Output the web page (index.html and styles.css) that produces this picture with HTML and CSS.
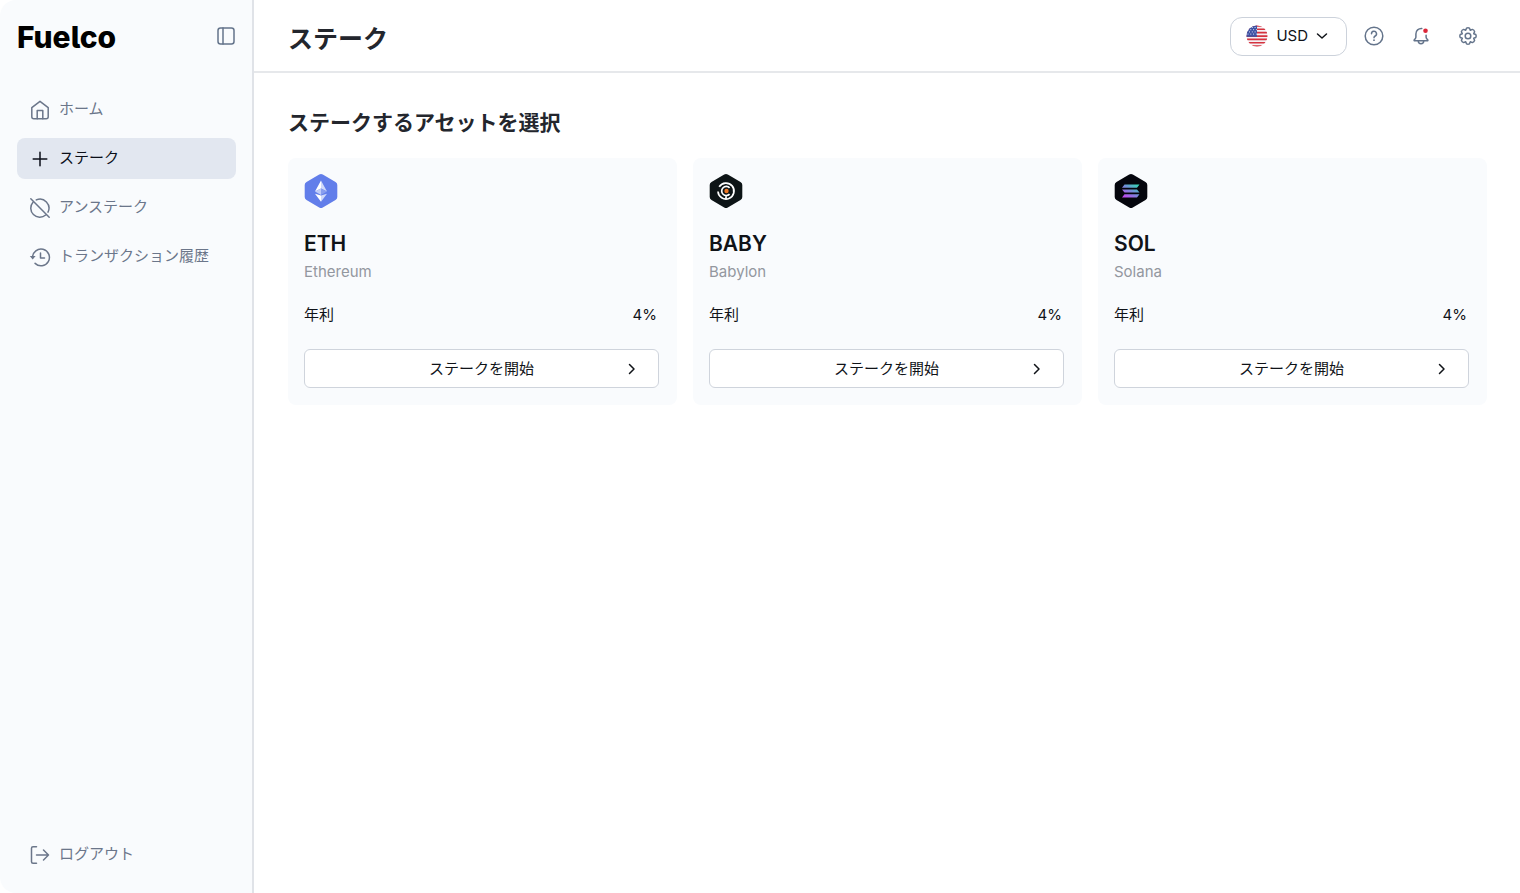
FILE: index.html
```html
<!DOCTYPE html>
<html lang="ja">
<head>
    <meta charset="UTF-8">
    <meta name="viewport" content="width=device-width, initial-scale=1.0">
    <title>Fuelco - ステーク</title>
    <link rel="stylesheet" href="styles.css">
</head>
<body>

    <div class="app">

        <!-- Sidebar -->
        <aside class="sidebar">
            <div class="brand">
                <a href="#" class="logo">Fuelco</a>
                <button type="button" class="icon-btn" aria-label="サイドバー">
                    <svg width="20" height="20" viewBox="0 0 20 20"><rect x="2" y="2" width="16" height="16" rx="2.5"/><path d="M7 2v16"/></svg>
                </button>
            </div>

            <nav class="menu">
                <a href="#" class="menu-item">
                    <svg width="22" height="22" viewBox="0 0 22 22"><path d="M2.800 8.600 11 2.300l8.200 6.300v9.200a2 2 0 0 1-2 2H4.800a2 2 0 0 1-2-2z"/><path d="M8.200 19.800v-8.300h5.600v8.300"/></svg>
                    <span>ホーム</span>
                </a>
                <a href="#" class="menu-item active">
                    <svg width="22" height="22" viewBox="0 0 22 22"><path d="M11 4.200v13.600M4.200 11h13.600"/></svg>
                    <span>ステーク</span>
                </a>
                <a href="#" class="menu-item">
                    <svg width="22" height="22" viewBox="0 0 22 22"><path d="M1.800 1.800 20.200 20.200"/><path d="M7.300 2.900A9 9 0 0 1 19 15.100M16.700 18A9 9 0 0 1 4 5.300"/></svg>
                    <span>アンステーク</span>
                </a>
                <a href="#" class="menu-item">
                    <svg width="22" height="22" viewBox="0 0 22 22"><path d="M3.600 11.500A8.400 8.400 0 1 1 6.100 17.400"/><path d="M11.500 7v5h4"/><path class="solid" d="M.8 10h5.800l-2.900 3.500z"/></svg>
                    <span>トランザクション履歴</span>
                </a>
            </nav>

            <div class="menu menu-bottom">
                <a href="#" class="menu-item">
                    <svg width="22" height="22" viewBox="0 0 22 22"><path d="M7.500 2.800H4a1.500 1.500 0 0 0-1.500 1.500v13.400A1.500 1.500 0 0 0 4 19.200h3.500"/><path d="M7.500 11h12M14.500 6l5 5-5 5"/></svg>
                    <span>ログアウト</span>
                </a>
            </div>
        </aside>

        <div class="page">
            <header class="topbar">
                <h1>ステーク</h1>
                <div class="tools">
                    <button type="button" class="currency">
                        <svg class="flag" width="22" height="22" viewBox="0 0 22 22">
                            <defs><clipPath id="flag-clip"><circle cx="11" cy="11" r="10.500"/></clipPath></defs>
                            <g clip-path="url(#flag-clip)">
                                <rect width="22" height="22" fill="#f4f1f4"/>
                                <path fill="#d5333f" d="M0 0h22v1.700H0zM0 3.400h22v1.700H0zM0 6.800h22v1.700H0zM0 10.200h22v1.700H0zM0 13.500h22v1.700H0zM0 16.900h22v1.700H0zM0 20.300h22V22H0z"/>
                                <rect width="11" height="11.800" fill="#3d52a4"/>
                                <path stroke="#d9def2" stroke-width="1" stroke-dasharray="1 1.800" d="M3 2.500h8M1.500 4.700h9.500M3 6.900h8M1.500 9.100h9.500"/>
                            </g>
                        </svg>
                        <span>USD</span>
                        <svg class="caret" width="12" height="12" viewBox="0 0 12 12"><path d="m1.500 4 4.500 4 4.500-4"/></svg>
                    </button>
                    <button type="button" class="icon-btn" aria-label="ヘルプ">
                        <svg width="20" height="20" viewBox="0 0 20 20"><circle cx="10" cy="10" r="8.800"/><path d="M7.500 7.800a2.500 2.500 0 1 1 3.700 2.200c-.8.500-1.200.9-1.200 1.800"/><circle class="solid" cx="10" cy="14.200" r=".9"/></svg>
                    </button>
                    <button type="button" class="icon-btn" aria-label="通知">
                        <svg width="20" height="20" viewBox="0 0 20 20"><path d="M10.800 2.400A5.500 5.500 0 0 0 4.900 8v3.200c0 .9-.9 1.800-1.700 2.800-.3.500 0 .8.500.8h12.600c.5 0 .8-.3.500-.8-.8-1-1.700-1.900-1.700-2.800V9.300"/><path d="M7.300 15a2.700 2.700 0 0 0 5.400 0"/><circle class="dot" cx="14.500" cy="4.800" r="2.300"/></svg>
                    </button>
                    <button type="button" class="icon-btn" aria-label="設定">
                        <svg width="20" height="20" viewBox="0 0 20 20"><circle cx="10" cy="10" r="2.800"/><path d="M8.500 2.200Q10 1.400 11.500 2.200L12.300 4.300 14.400 3.400Q16.100 3.900 16.600 5.600L15.700 7.700 17.800 8.500Q18.600 10 17.800 11.500L15.700 12.300 16.600 14.400Q16.100 16.100 14.400 16.600L12.300 15.700 11.500 17.800Q10 18.600 8.500 17.800L7.700 15.700 5.600 16.600Q3.900 16.100 3.400 14.400L4.300 12.300 2.200 11.500Q1.400 10 2.200 8.500L4.300 7.700 3.400 5.600Q3.900 3.900 5.600 3.400L7.700 4.300z"/></svg>
                    </button>
                </div>
            </header>

            <main class="content">
                <h2>ステークするアセットを選択</h2>

                <div class="assets">
                    <section class="card">
                        <svg class="coin" width="34" height="34" viewBox="0 0 34 34">
                            <path fill="#627eea" d="M15.200.6a3.600 3.600 0 0 1 3.600 0l12.700 7.300a3.600 3.600 0 0 1 1.800 3.100v12a3.600 3.600 0 0 1-1.800 3.100l-12.700 7.300a3.600 3.600 0 0 1-3.600 0L2.500 26.100A3.600 3.600 0 0 1 .7 23V11a3.600 3.600 0 0 1 1.800-3.100z"/>
                            <path fill="#fff" d="M17 6.500v8l-6 3zM17 21.500v6.300l-6-8z"/>
                            <path fill="#d0d9fa" d="M17 6.500l6 11-6-3zM17 21.500l6-1.700-6 8z"/>
                            <path fill="#c0ccf8" d="M17 14.500v6.400l-6-3.400z"/>
                            <path fill="#899eef" d="M17 14.500l6 3-6 3.400z"/>
                        </svg>
                        <h3>ETH</h3>
                        <p class="name">Ethereum</p>
                        <div class="rate"><span>年利</span><span>4%</span></div>
                        <button type="button" class="start-btn">
                            <span>ステークを開始</span>
                            <svg width="12" height="12" viewBox="0 0 12 12"><path d="m3.500 1.500 4.500 4.500-4.500 4.500"/></svg>
                        </button>
                    </section>

                    <section class="card">
                        <svg class="coin" width="34" height="34" viewBox="0 0 34 34">
                            <path fill="#0d1416" d="M15.200.6a3.600 3.600 0 0 1 3.600 0l12.700 7.300a3.600 3.600 0 0 1 1.800 3.100v12a3.600 3.600 0 0 1-1.800 3.100l-12.700 7.300a3.600 3.600 0 0 1-3.600 0L2.500 26.100A3.600 3.600 0 0 1 .7 23V11a3.600 3.600 0 0 1 1.800-3.100z"/>
                            <g fill="none" stroke="#fff" stroke-width="1.700">
                                <path d="M10.200 12.800a8 8 0 1 1-1.200 4.700"/>
                                <path d="M20.600 13.800a4.600 4.600 0 1 0 0 6.400M17 21.500V25"/>
                            </g>
                            <circle cx="17.500" cy="17" r="2.200" fill="#ee7623"/>
                        </svg>
                        <h3>BABY</h3>
                        <p class="name">Babylon</p>
                        <div class="rate"><span>年利</span><span>4%</span></div>
                        <button type="button" class="start-btn">
                            <span>ステークを開始</span>
                            <svg width="12" height="12" viewBox="0 0 12 12"><path d="m3.500 1.500 4.500 4.500-4.500 4.500"/></svg>
                        </button>
                    </section>

                    <section class="card">
                        <svg class="coin" width="34" height="34" viewBox="0 0 34 34">
                            <defs>
                                <linearGradient id="sol" gradientUnits="userSpaceOnUse" x1="23" y1="9" x2="12" y2="25">
                                    <stop offset="0" stop-color="#2de0b0"/>
                                    <stop offset=".5" stop-color="#748bd8"/>
                                    <stop offset="1" stop-color="#c643f0"/>
                                </linearGradient>
                            </defs>
                            <path fill="#05060d" d="M15.200.6a3.600 3.600 0 0 1 3.600 0l12.700 7.300a3.600 3.600 0 0 1 1.800 3.100v12a3.600 3.600 0 0 1-1.800 3.100l-12.700 7.300a3.600 3.600 0 0 1-3.600 0L2.500 26.100A3.600 3.600 0 0 1 .7 23V11a3.600 3.600 0 0 1 1.800-3.100z"/>
                            <path fill="url(#sol)" d="M10.500 10.500H25.500L23 13.700H8zM8 15.400H23L25.500 18.600H10.500zM10.500 20.300H25.500L23 23.500H8z"/>
                        </svg>
                        <h3>SOL</h3>
                        <p class="name">Solana</p>
                        <div class="rate"><span>年利</span><span>4%</span></div>
                        <button type="button" class="start-btn">
                            <span>ステークを開始</span>
                            <svg width="12" height="12" viewBox="0 0 12 12"><path d="m3.500 1.500 4.500 4.500-4.500 4.500"/></svg>
                        </button>
                    </section>
                </div>
            </main>
        </div>
    </div>

</body>
</html>
```
FILE: styles.css
```css
* {
    box-sizing: border-box;
}

body {
    font-family: Inter, "Noto Sans CJK JP", sans-serif;
    font-size: 15px;
    line-height: 24px;
    margin: 0;
    color: #101318;
    background-color: #fff;
}

h1, h2, h3, p {
    margin: 0;
}

a {
    color: inherit;
    text-decoration: none;
}

button {
    font: inherit;
    color: inherit;
    cursor: pointer;
}

svg {
    display: block;
    flex-shrink: 0;
}

.app {
    display: flex;
    min-height: 100vh;
}

/* Sidebar */
.sidebar {
    display: flex;
    flex-direction: column;
    width: 254px;
    flex-shrink: 0;
    padding: 16px 16px 18px 17px;
    background-color: #f9fbfd;
    border-right: 2px solid #e0e3e8;
    border-radius: 16px 0 0 16px;
}

.brand {
    display: flex;
    align-items: center;
    justify-content: space-between;
    height: 40px;
    margin-bottom: 33px;
}

.logo {
    padding-top: 2px;
    font-size: 30px;
    font-weight: 800;
    font-feature-settings: "cv05";
    color: #000;
}

.icon-btn {
    padding: 0;
    border: none;
    background: none;
    color: #64748b;
}

.icon-btn svg,
.menu-item svg,
.caret,
.start-btn svg {
    fill: none;
    stroke: currentColor;
    stroke-width: 1.5;
    stroke-linecap: round;
    stroke-linejoin: round;
}

.icon-btn .solid,
.menu-item .solid {
    fill: currentColor;
    stroke: none;
}

.icon-btn .dot {
    fill: #dc2638;
    stroke: none;
}

/* Menu */
.menu {
    display: flex;
    flex-direction: column;
    gap: 8px;
}

.menu-bottom {
    margin-top: auto;
}

.menu-item {
    display: flex;
    align-items: center;
    gap: 8px;
    height: 41px;
    padding: 0 12px;
    border-radius: 8px;
    color: #6b768a;
}

.menu-item span {
    padding-bottom: 2px;
}

.menu-item.active {
    background-color: #e2e7f0;
    color: #0b0f19;
}

/* Top bar */
.page {
    flex: 1;
    min-width: 0;
}

.topbar {
    display: flex;
    align-items: center;
    justify-content: space-between;
    height: 73px;
    padding: 1px 42px 0 34px;
    border-bottom: 2px solid #e6e8eb;
}

h1 {
    padding-top: 5px;
    font-size: 25px;
    line-height: 32px;
    font-weight: 700;
    color: #23262d;
}

.tools {
    display: flex;
    align-items: center;
    gap: 27px;
}

.currency {
    display: flex;
    align-items: center;
    gap: 8px;
    height: 39px;
    margin-right: -10px;
    padding: 0 18px 0 15px;
    border: 1px solid #ccd2db;
    border-radius: 12px;
    background-color: #fff;
}

/* Content */
.content {
    padding: 34px 33px 34px 34px;
}

h2 {
    margin-bottom: 19px;
    font-size: 21px;
    line-height: 32px;
    font-weight: 700;
    color: #23262d;
}

.assets {
    display: grid;
    grid-template-columns: repeat(3, 1fr);
    gap: 16px;
}

.card {
    padding: 16px 18px 17px 16px;
    border-radius: 8px;
    background-color: #f9fbfd;
}

h3 {
    margin-top: 22px;
    font-size: 21px;
    line-height: 28px;
    font-weight: 600;
}

.name {
    margin-top: 2px;
    color: #93979f;
}

.rate {
    display: flex;
    justify-content: space-between;
    margin: 19px 2px 22px 0;
}

.start-btn {
    display: flex;
    align-items: center;
    width: 100%;
    height: 39px;
    padding: 0 20px 0 32px;
    border: 1px solid #cfd4dc;
    border-radius: 6px;
    background-color: #fff;
}

.start-btn span {
    flex: 1;
    text-align: center;
}
```
